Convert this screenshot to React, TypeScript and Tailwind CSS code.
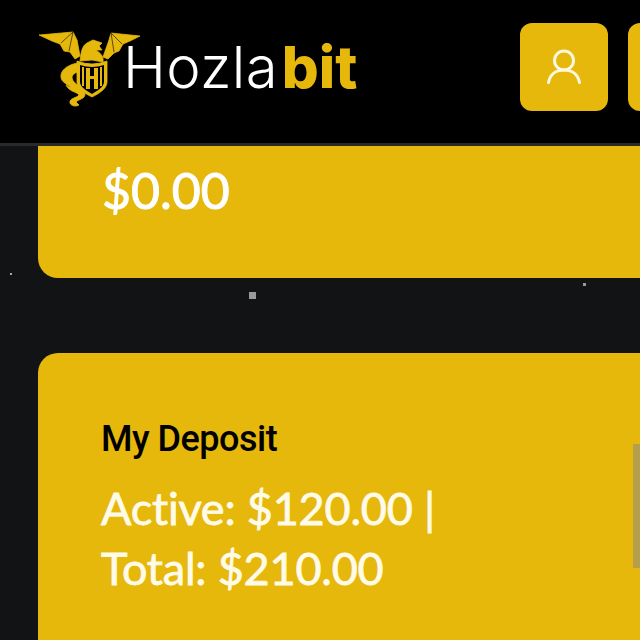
export default function App() {
  const Y = "#e5b80b";
  return (
    <div className="relative w-[640px] h-[640px] overflow-hidden bg-[#111315] font-['Lato',sans-serif]">
      <header className="h-[146px] bg-black border-b-[3px] border-[#2a2a2a] flex items-center pl-[35px] pb-[9px] overflow-hidden">
        <svg width="110" height="85" viewBox="0 0 110 85" className="shrink-0 mt-[2px]">
          <g fill={Y} stroke={Y} strokeWidth="0.8" strokeLinejoin="round">
            <path d="M4 9 L38 6 L42 14 L45 30 L40 33 L35 26 L29 25 L25 18 L17 15 Z" />
            <path d="M105 10 L76 7 L74 14 L68 31 L73 33 L79 27 L84 25 L88 18 L95 15 Z" />
            <path d="M45 35 C46 26 47 20 52 17 L58 14 L67 17 L64 20 L67 24 L61 24 C65 27 69 30 68 36 L57 34 Z" />
            <path d="M43 37 C36 38 27 42 26 49 C25 55 31 58 36 61 C34 61 33 60 31 59 C34 66 43 66 44 69 C42 72 34 72 35 77 C36 80 41 81 44 79 L41 76 C44 73 50 73 50 68 C50 63 42 59 39 56 C36 52 36 48 43 46 Z" />
            <path d="M42 35 Q57 41 72 35 L72 56 C72 63 63 68 57 71 C51 68 42 63 42 56 Z" />
          </g>
          <g stroke="#000" strokeWidth="0.6" fill="none">
            <path d="M38 6 L26 17 M38 6 L34 25 M76 7 L87 18 M76 7 L79 26" />
          </g>
          <path d="M45 39 Q57 43 69 39 L69 56 C69 61 62 65 57 68 C52 65 45 61 45 56 Z" fill="#000" />
          <g fill={Y}>
            <rect x="47" y="41" width="2" height="19" />
            <rect x="65" y="41" width="2" height="19" />
            <rect x="51" y="42" width="4" height="21" />
            <rect x="59" y="42" width="4" height="21" />
            <rect x="51" y="50" width="12" height="3" />
          </g>
        </svg>
        <div className="ml-[-22px] flex gap-[4px] font-['Inter',sans-serif] text-[58px] leading-none whitespace-nowrap">
          <span className="text-white font-light tracking-[0.3px]">Hozla</span>
          <span className="font-extrabold text-[#e5b80b]">bit</span>
        </div>
        <div className="ml-auto flex gap-5 shrink-0 -mr-[76px]">
          <button className="w-[88px] h-[88px] rounded-xl bg-[#e5b80b] flex items-center justify-center">
            <svg width="36" height="36" viewBox="0 0 36 36" fill="none" stroke="#fff8e0" strokeWidth="3" strokeLinecap="round">
              <circle cx="18" cy="11.5" r="9.5" />
              <path d="M2.5 33.5 C4 25.5 10 21 18 21 C26 21 32 25.5 33.5 33.5" />
            </svg>
          </button>
          <button className="w-[88px] h-[88px] rounded-xl bg-[#e5b80b]" />
        </div>
      </header>

      <section className="ml-[38px] h-[132px] w-[640px] rounded-bl-[20px] bg-[#e5b80b] pl-[64px] pt-[12px]">
        <p className="text-[50px] leading-[64px] text-white [-webkit-text-stroke:1px_#ffffff]">$0.00</p>
      </section>

      <section className="ml-[38px] mt-[75px] h-[320px] w-[640px] rounded-[20px] bg-[#e5b80b] pl-[63px] pt-[64px]">
        <h2 className="text-[36px] leading-[44px] text-black font-medium font-['Roboto',sans-serif] tracking-[-0.5px]">My Deposit</h2>
        <p className="mt-[17px] w-[400px] text-[45px] leading-[60px] tracking-[-0.2px] text-[#fffbe8] [-webkit-text-stroke:0.8px_#fffbe8]">
          Active: $120.00 | Total: $210.00
        </p>
      </section>

      <div className="absolute left-[633px] top-[444px] w-[7px] h-[124px] bg-[#b59f4a]" />
      <div className="absolute left-[249px] top-[292px] w-[7px] h-[7px] bg-[#9a9a9a]" />
      <div className="absolute left-[10px] top-[273px] w-[2px] h-[2px] bg-[#aaa]" />
      <div className="absolute left-[583px] top-[283px] w-[3px] h-[3px] bg-[#999]" />
    </div>
  );
}
